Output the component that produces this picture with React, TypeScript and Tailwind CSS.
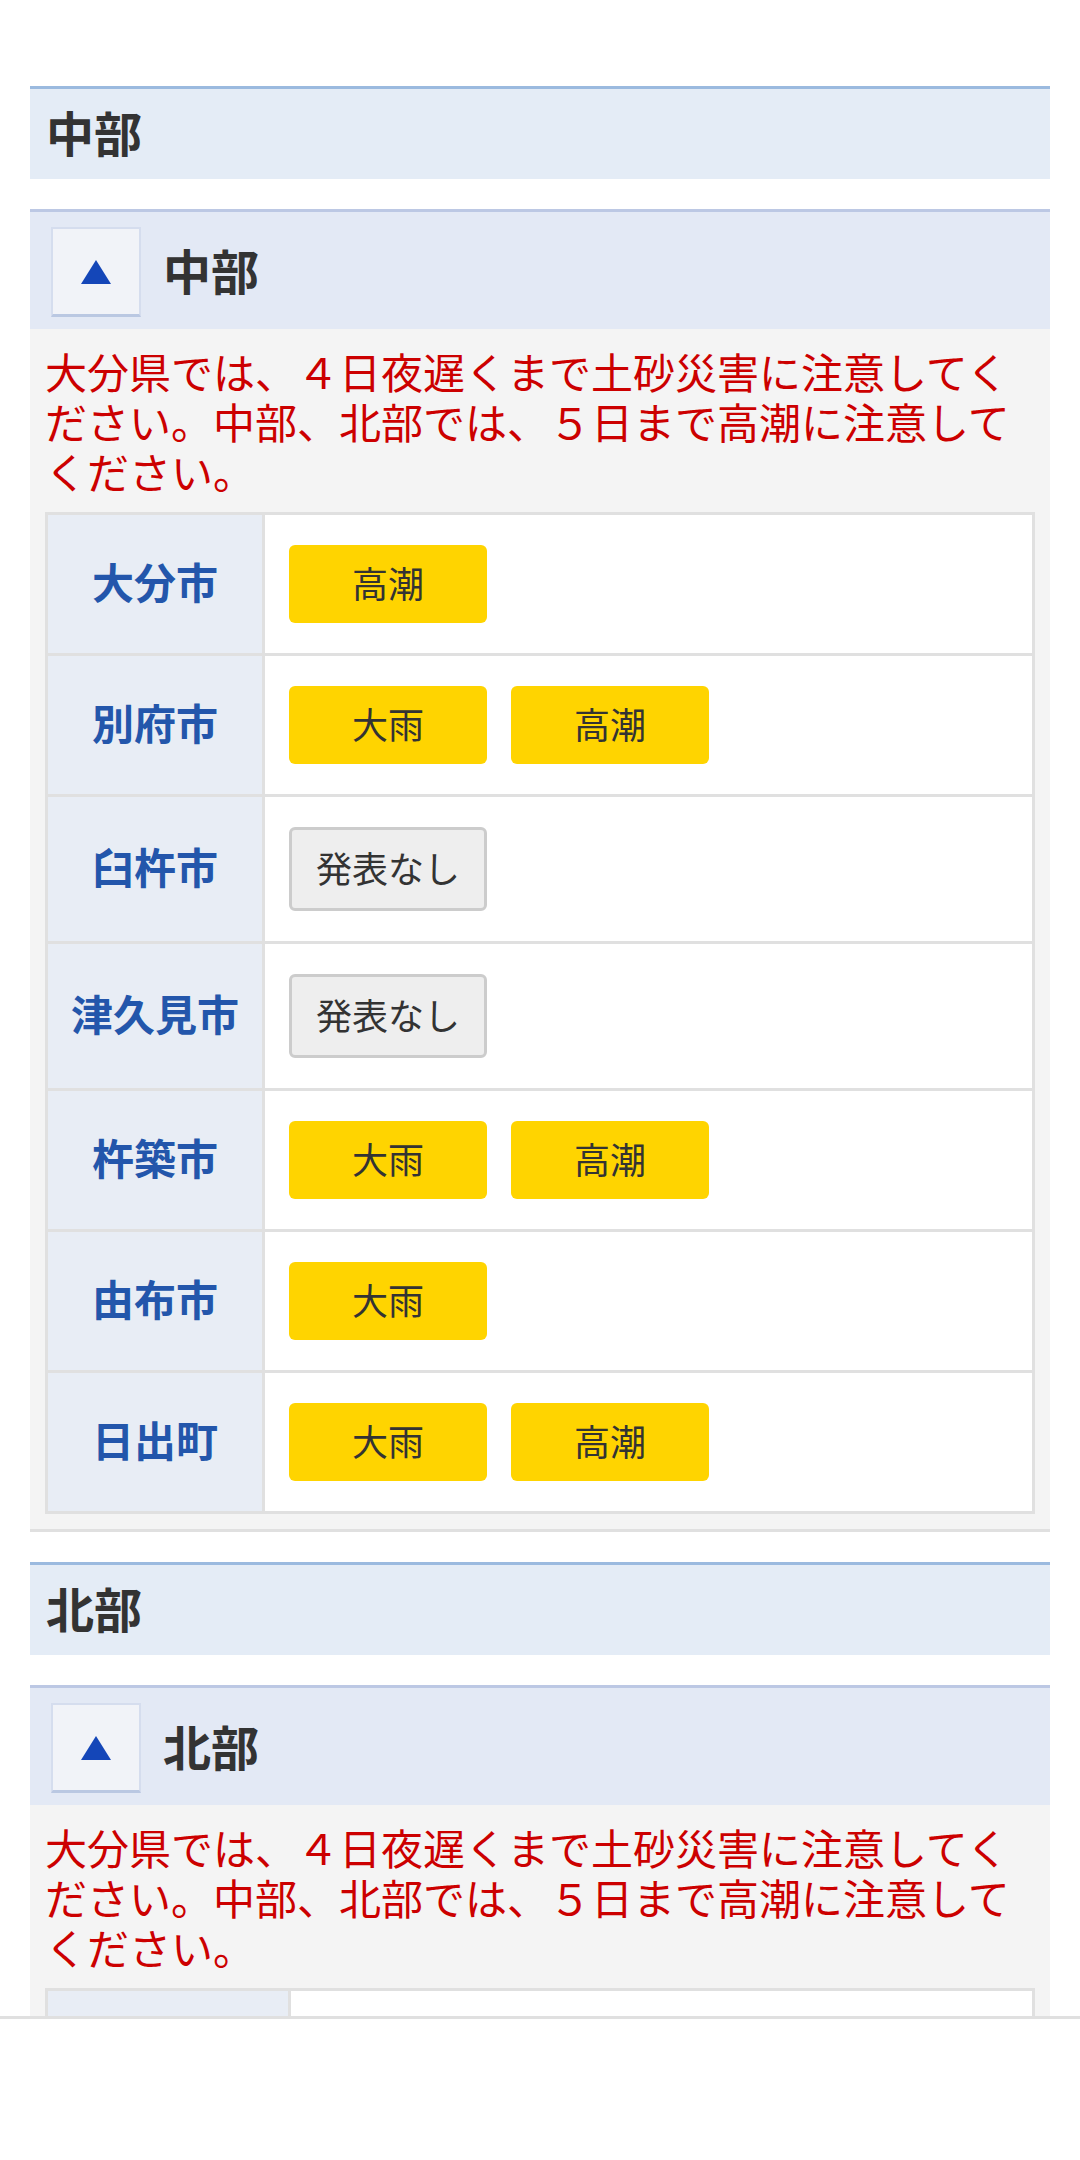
import React from "react";

type Badge = { label: string; kind: "warn" | "none" };
type Row = { city: string; badges: Badge[] };

const W = (label: string): Badge => ({ label, kind: "warn" });
const N: Badge = { label: "発表なし", kind: "none" };

const chubu: Row[] = [
  { city: "大分市", badges: [W("高潮")] },
  { city: "別府市", badges: [W("大雨"), W("高潮")] },
  { city: "臼杵市", badges: [N] },
  { city: "津久見市", badges: [N] },
  { city: "杵築市", badges: [W("大雨"), W("高潮")] },
  { city: "由布市", badges: [W("大雨")] },
  { city: "日出町", badges: [W("大雨"), W("高潮")] },
];

const hokubu: Row[] = [{ city: "", badges: [] }];

const MESSAGE =
  "大分県では、４日夜遅くまで土砂災害に注意してください。中部、北部では、５日まで高潮に注意してください。";

function BadgeView({ b }: { b: Badge }) {
  if (b.kind === "warn") {
    return (
      <div className="w-[198px] h-[78px] rounded-[6px] bg-[#ffd400] flex items-center justify-center pb-[4px] text-[36px] leading-none text-[#333333]">
        {b.label}
      </div>
    );
  }
  return (
    <div className="w-[198px] h-[84px] rounded-[6px] bg-[#eeeeee] border-[3px] border-[#cccccc] flex items-center justify-center pb-[4px] text-[36px] leading-none text-[#333333]">
      {b.label}
    </div>
  );
}

function Section({
  title,
  rows,
  wide,
}: {
  title: string;
  rows: Row[];
  wide?: boolean;
}) {
  return (
    <section className="mb-[30px]">
      <div className="h-[93px] border-t-[3px] border-[#9bbadf] bg-[#e4ecf6] flex items-center pl-[16px] pb-[6px]">
        <h2 className="text-[48px] font-bold leading-none text-[#333333]">{title}</h2>
      </div>
      <div className="mt-[30px] h-[120px] border-t-[3px] border-[#bcc8e4] bg-[#e3e9f5] flex items-center pl-[21px] pt-[3px]">
        <button className="w-[90px] h-[90px] bg-[#f1f3f8] border-2 border-[#d5ddee] border-b-[3px] border-b-[#bac8e2] flex items-center justify-center">
          <svg width="30" height="24" viewBox="0 0 30 24">
            <polygon points="15,0 30,24 0,24" fill="#1446b8" />
          </svg>
        </button>
        <h3 className="ml-[22px] mb-[6px] text-[48px] font-bold leading-none text-[#333333]">{title}</h3>
      </div>
      <div className="bg-[#f4f4f4] border-b-[3px] border-[#e0e0e0] px-[15px] pt-[17px] pb-[15px]">
        <p className="text-[42px] leading-[50px] text-[#cc0000]">{MESSAGE}</p>
        <div className="mt-[16px] border-[3px] border-[#e0e0e0] bg-white">
          {rows.map((r, i) => (
            <div
              key={i}
              className={`flex min-h-[138px] ${i > 0 ? "border-t-[3px] border-[#e0e0e0]" : ""}`}
            >
              <div
                className={`${wide ? "w-[243px]" : "w-[217px]"} shrink-0 bg-[#e8edf5] border-r-[3px] border-[#e0e0e0] flex items-center justify-center pb-[6px] text-[42px] font-bold leading-none text-[#2356ab]`}
              >
                {r.city}
              </div>
              <div className="flex-1 bg-white px-[24px] py-[30px] flex gap-[24px]">
                {r.badges.map((b, j) => (
                  <BadgeView key={j} b={b} />
                ))}
              </div>
            </div>
          ))}
        </div>
      </div>
    </section>
  );
}

export default function App() {
  return (
    <div className="relative h-[2160px] overflow-hidden bg-white font-['Noto_Sans_CJK_JP','Noto_Sans',sans-serif]">
      <div className="px-[30px] pt-[86px]">
        <Section title="中部" rows={chubu} />
        <Section title="北部" rows={hokubu} wide />
      </div>
      <div className="absolute left-0 right-0 bottom-0 h-[144px] bg-white border-t-[3px] border-[#e0e0e0]" />
    </div>
  );
}
